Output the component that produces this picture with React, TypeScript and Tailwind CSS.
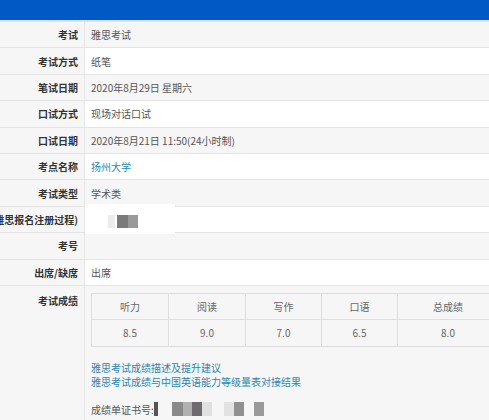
import React from "react";

const font = { fontFamily: '"Noto Sans CJK SC", "Noto Sans", sans-serif' };

type Row = { label: string; value?: React.ReactNode; grey: boolean };

function Blocks({ items }: { items: [number, number, string][] }) {
  return (
    <div className="relative h-[14px]" style={{ width: 200 }}>
      {items.map(([x, w, c], i) => (
        <div key={i} className="absolute top-0 h-[14px]" style={{ left: x, width: w, background: c }} />
      ))}
    </div>
  );
}

export default function App() {
  const rows: Row[] = [
    { label: "考试", value: "雅思考试", grey: true },
    { label: "考试方式", value: "纸笔", grey: false },
    { label: "笔试日期", value: "2020年8月29日 星期六", grey: true },
    { label: "口试方式", value: "现场对话口试", grey: false },
    { label: "口试日期", value: "2020年8月21日 11:50(24小时制)", grey: true },
    { label: "考点名称", value: <span className="text-[#2a86b4]">扬州大学</span>, grey: false },
    { label: "考试类型", value: "学术类", grey: true },
    {
      label: "证件号码(雅思报名注册过程)",
      value: (
        <div className="relative w-[90px] h-[30px] bg-white -ml-[6px]">
          <div className="absolute left-[23px] top-[11px] w-[7px] h-[13px] bg-[#ececec]" />
          <div className="absolute left-[32px] top-[11px] w-[11px] h-[13px] bg-[#7b7b7b]" />
          <div className="absolute left-[43px] top-[11px] w-[10px] h-[13px] bg-[#9a9a9a]" />
        </div>
      ),
      grey: false,
    },
    { label: "考号", value: "", grey: true },
    { label: "出席/缺席", value: "出席", grey: false },
  ];

  const cols = [
    { h: "听力", v: "8.5", w: 77 },
    { h: "阅读", v: "9.0", w: 77 },
    { h: "写作", v: "7.0", w: 76 },
    { h: "口语", v: "6.5", w: 76 },
    { h: "总成绩", v: "8.0", w: 100 },
  ];

  return (
    <div className="w-full h-[420px] overflow-hidden bg-[#f6f6f6]" style={font}>
      <div className="h-[20px] bg-[#0059c5]" />
      <div className="h-[2px] bg-[#d6e2ef]" />
      {rows.map((r, i) => (
        <div
          key={i}
          className={`flex h-[26.4px] border-b border-[#e4e4e4] ${r.grey ? "bg-[#f6f6f6]" : "bg-white"}`}
        >
          <div className="w-[85px] shrink-0 flex items-center justify-end pr-[6px] bg-[#f6f6f6] border-r border-[#e6e6e6] overflow-hidden whitespace-nowrap">
            <span className="text-[10px] font-bold text-[#333]">{r.label}</span>
          </div>
          <div className="flex-1 flex items-center pl-[6px] text-[10px] text-[#555] whitespace-nowrap overflow-visible">
            {r.value}
          </div>
        </div>
      ))}
      <div className="flex bg-[#f6f6f6]">
        <div className="w-[85px] shrink-0 flex justify-end pr-[6px] pt-[7px] border-r border-[#e6e6e6] h-[140px]">
          <span className="text-[10px] font-bold text-[#333]">考试成绩</span>
        </div>
        <div className="flex-1 pl-[6px] pt-[7px]">
          <div className="flex w-[406px] border border-[#dedede]">
            {cols.map((c, i) => (
              <div
                key={i}
                className={`shrink-0 flex flex-col ${i < cols.length - 1 ? "border-r border-[#dedede]" : ""}`}
                style={{ width: c.w }}
              >
                <div className="h-[26px] flex items-center justify-center text-[10px] text-[#666] border-b border-[#dedede]">
                  {c.h}
                </div>
                <div className="h-[26px] flex items-center justify-center text-[10px] text-[#666]">{c.v}</div>
              </div>
            ))}
          </div>
          <div className="mt-[14px] flex flex-col text-[10px] leading-[14px] text-[#2a86b4]">
            <span>雅思考试成绩描述及提升建议</span>
            <span>雅思考试成绩与中国英语能力等级量表对接结果</span>
          </div>
          <div className="mt-[13px] flex items-center text-[10px] text-[#555] whitespace-nowrap">
            <span>成绩单证书号:</span>
            <Blocks
              items={[
                [0, 4, "#555"],
                [18, 11, "#8a8a8a"],
                [29, 9, "#b0b0b0"],
                [38, 10, "#6e6a70"],
                [48, 10, "#e0e0e0"],
                [70, 10, "#e2e2e2"],
                [80, 10, "#909090"],
                [100, 10, "#9a9a9a"],
              ]}
            />
          </div>
        </div>
      </div>
    </div>
  );
}
